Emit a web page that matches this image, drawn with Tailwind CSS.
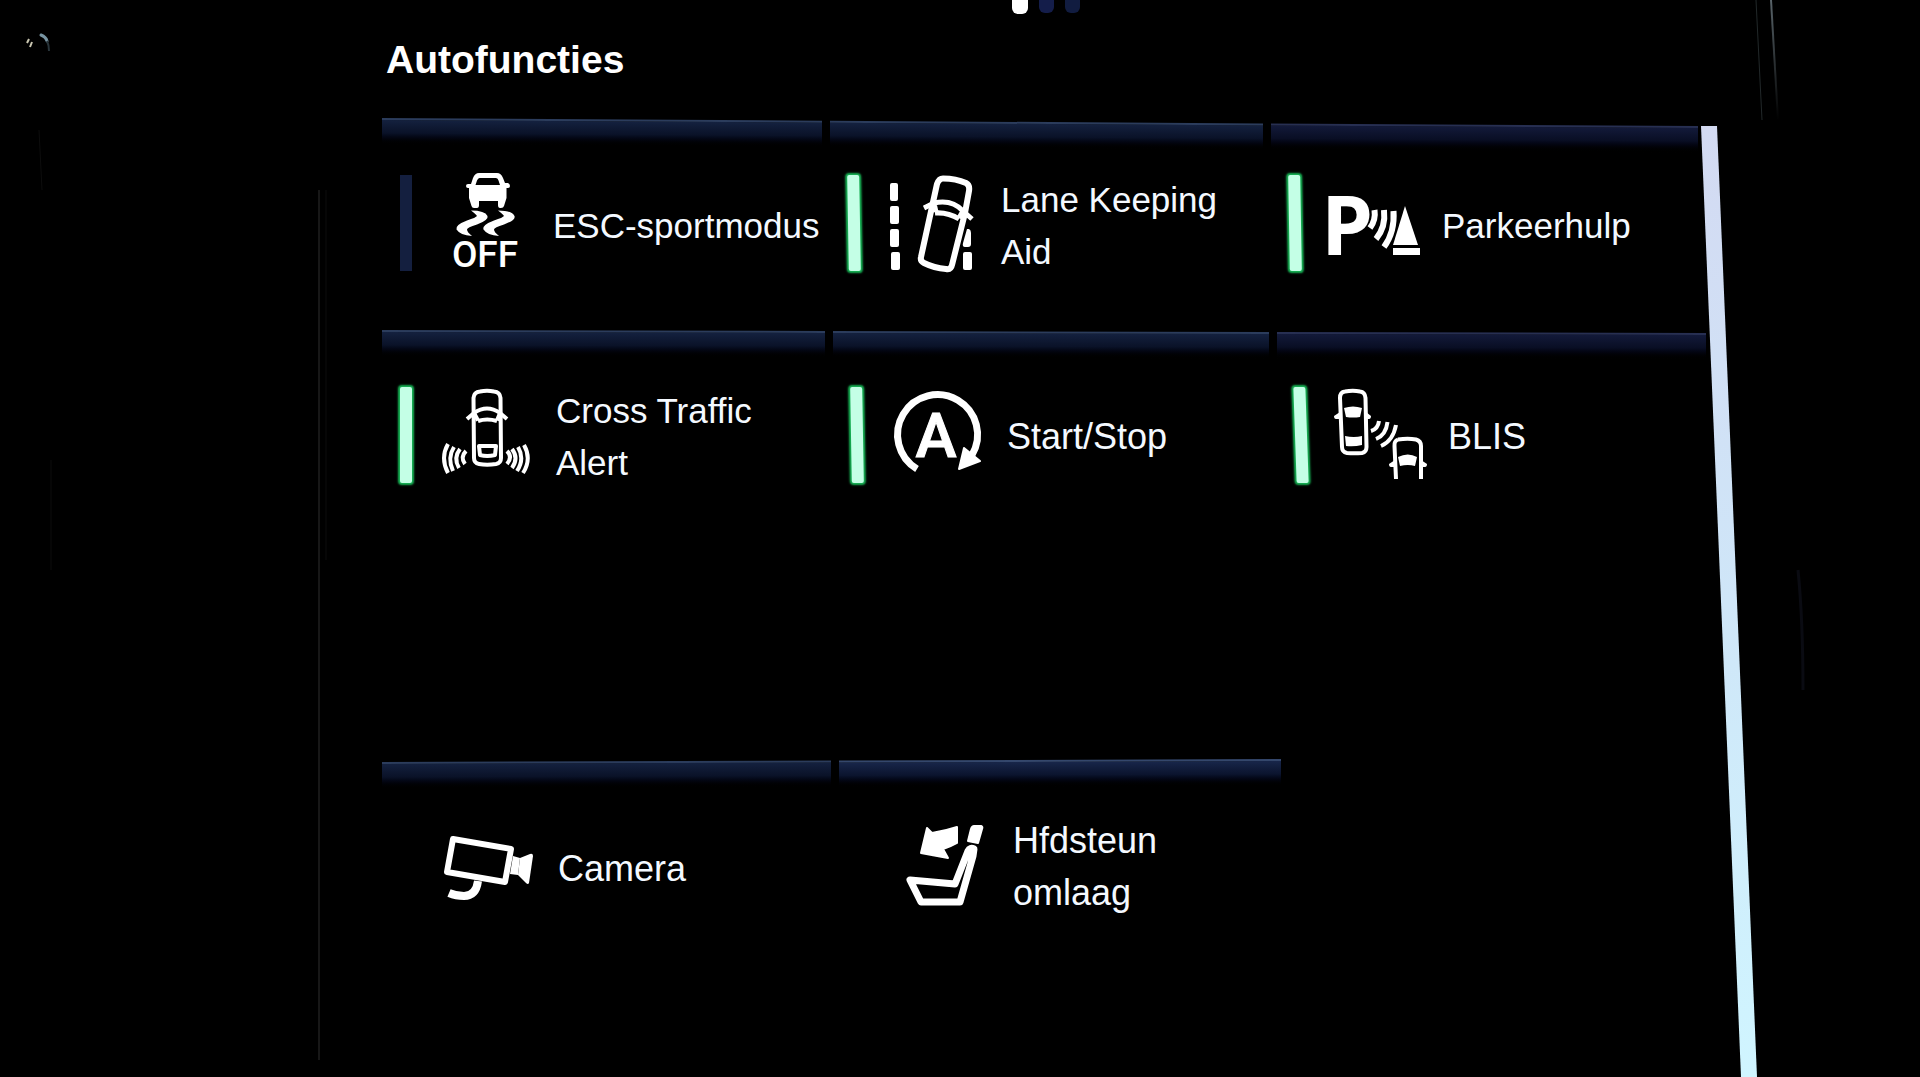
<!DOCTYPE html>
<html lang="nl">
<head>
    <meta charset="UTF-8">
    <meta name="viewport" content="width=device-width, initial-scale=1.0">
    <title>Autofuncties</title>
    <script src="https://cdn.jsdelivr.net/npm/@tailwindcss/browser@4"></script>
</head>
<body class="relative min-h-screen overflow-x-hidden bg-black font-['Liberation_Sans',Arial,sans-serif] text-[#f4f9ff]">

    <!-- Pagina-indicator -->
    <nav class="flex h-3.5 justify-center gap-[11px] pl-[172px]" aria-label="Pagina's">
        <button type="button" aria-label="Pagina 1" class="h-3.5 w-4 rounded-b-md bg-white"></button>
        <button type="button" aria-label="Pagina 2" class="h-[13px] w-[15px] rounded-b-md bg-[#141d4a]"></button>
        <button type="button" aria-label="Pagina 3" class="h-[13px] w-[15px] rounded-b-md bg-[#111c40]"></button>
    </nav>

    <main class="pl-[382px]">
        <h1 class="mt-[26px] mb-[39px] pl-1 text-[39px] leading-none font-bold text-white">Autofuncties</h1>

        <!-- Rij 1 -->
        <section class="mr-[222px]">
            <div class="grid h-7 origin-top-left skew-y-[0.35deg] grid-cols-[440fr_433fr_427fr] gap-2">
                <div class="border-t-2 border-[#2b3c5c] bg-linear-to-b from-[#14213f] via-[#0a1228] to-black"></div>
                <div class="border-t-2 border-[#2b3c5c] bg-linear-to-b from-[#14213f] via-[#0a1228] to-black"></div>
                <div class="border-t-2 border-[#272f52] bg-linear-to-b from-[#131a3a] via-[#090e24] to-black"></div>
            </div>
            <div class="grid grid-cols-[440fr_433fr_427fr] gap-2">
                <button type="button" aria-pressed="false" class="flex h-[154px] items-center pl-[18px] text-left">
                    <span class="h-24 w-3 shrink-0 bg-[#141f3f]"></span>
                    <svg class="ml-[26px] h-[98px] w-[94px] shrink-0 overflow-visible" viewBox="0 0 94 98" fill="#fff" aria-hidden="true">
                        <path fill-rule="evenodd" d="M41 -1H59Q63 -1 65 4L67 9H70Q72 10 72 12T70 14H68.500V24L66 32Q65.500 34 63 34H62Q60 34 60 31V27H41V31Q41 34 39 34H36Q34 34 33.500 32L31 24V14H30Q28 14 28 12T30 10H33L35 4Q37 -1 41 -1ZM41.500 4Q40 4 39 6.500L37.500 11H62L60.500 6.500Q60 4 58 4Z"/>
                        <path id="skid" d="M33 36.500Q47 36.500 49.500 42Q51 46 39 50.500Q29 53.500 29 55.500Q29 58 34 62Q22 61 18.500 55.500Q17 51 29 46.500Q38 43.500 39 42Q38 40 33 36.500Z"/>
                        <use href="#skid" x="27"/>
                        <text x="47" y="93" text-anchor="middle" font-family="Roboto, sans-serif" font-weight="500" font-size="37">OFF</text>
                    </svg>
                    <span class="ml-[21px] pt-1.5 text-[35px] leading-[52px]">ESC-sportmodus</span>
                </button>

                <button type="button" aria-pressed="true" class="flex h-[154px] items-center pl-[18px] text-left">
                    <span class="h-24 w-3 shrink-0 skew-x-1 rounded-xs bg-[#c4ffe6] shadow-[0_0_2px_2px_#17b455]"></span>
                    <svg class="ml-[26px] h-[98px] w-[94px] shrink-0 overflow-visible" viewBox="0 0 94 98" fill="none" stroke="#fff" stroke-width="6" stroke-linejoin="round" aria-hidden="true">
                        <g fill="#fff" stroke="none">
                            <rect x="4" y="9" width="8" height="18" rx="2"/>
                            <rect x="4" y="32" width="9" height="18" rx="2"/>
                            <rect x="4" y="55" width="9" height="18" rx="2"/>
                            <rect x="5" y="78" width="9" height="18" rx="2"/>
                            <path d="M81 55H83Q85 56 85 59V70Q85 73 82 73H79Q76 73 77 69Z"/>
                            <rect x="77" y="78" width="9" height="18" rx="2"/>
                        </g>
                        <path d="M57 4.500Q70 4.500 80 9Q84 11 83 17L79 39L66 91Q65 96 60 95Q48 94 38 89Q34 87 35 83L51 10Q53 4.500 57 4.500Z"/>
                        <path stroke-width="5" d="M38 34L48 29Q66 25 77 37L86 45M49 39Q62 38 73 45M48 29L50 38M77 37L73 44"/>
                    </svg>
                    <span class="ml-[21px] pt-1.5 text-[35px] leading-[52px]">Lane Keeping<br>Aid</span>
                </button>

                <button type="button" aria-pressed="true" class="flex h-[154px] items-center pl-[18px] text-left">
                    <span class="h-24 w-3 shrink-0 skew-x-1 rounded-xs bg-[#c4ffe6] shadow-[0_0_2px_2px_#17b455]"></span>
                    <svg class="ml-[26px] h-[98px] w-[94px] shrink-0 overflow-visible" viewBox="0 0 94 98" fill="#fff" aria-hidden="true">
                        <text x="-6" y="81" font-family="'Open Sans', sans-serif" font-weight="700" font-size="83">P</text>
                        <path fill="none" stroke="#fff" stroke-width="6" d="M47.500 36Q49 46 43 54M57 36Q59 53 49 65M66.500 37Q68 58 57 73"/>
                        <path d="M78 32L91 71H66Z"/>
                        <rect x="66" y="74" width="27" height="7"/>
                    </svg>
                    <span class="ml-[21px] pt-1.5 text-[35px] leading-[52px]">Parkeerhulp</span>
                </button>
            </div>
        </section>

        <!-- Rij 2 -->
        <section class="mt-[30px] mr-[214px]">
            <div class="grid h-7 origin-top-left skew-y-[0.13deg] grid-cols-[443fr_436fr_429fr] gap-2">
                <div class="border-t-2 border-[#2b3c5c] bg-linear-to-b from-[#14213f] via-[#0a1228] to-black"></div>
                <div class="border-t-2 border-[#2b3c5c] bg-linear-to-b from-[#14213f] via-[#0a1228] to-black"></div>
                <div class="border-t-2 border-[#272f52] bg-linear-to-b from-[#131a3a] via-[#090e24] to-black"></div>
            </div>
            <div class="grid grid-cols-[443fr_436fr_429fr] gap-2">
                <button type="button" aria-pressed="true" class="flex h-[154px] items-center pl-[18px] text-left">
                    <span class="h-24 w-3 shrink-0 rounded-xs bg-[#c4ffe6] shadow-[0_0_2px_2px_#17b455]"></span>
                    <svg class="ml-[26px] h-[98px] w-[94px] shrink-0 overflow-visible" viewBox="0 0 94 98" fill="none" stroke="#fff" stroke-width="4" stroke-linejoin="round" aria-hidden="true">
                        <path d="M42 5.500Q49 4 56 5.500Q62 6 62.500 12L63 72Q63 77 58 78Q49 79.500 41 78Q36 77 36 72L35.500 12Q36 6 42 5.500Z"/>
                        <path d="M29 33L36 27Q49 18 62 27L69 33M40 35Q49 32 59 35M36 27L40 34.500M62 27L59 34.500"/>
                        <path stroke-width="4" d="M41 60H58L57 69Q49 71 42 69Z"/>
                        <path stroke-width="4" d="M10 58Q2 72 10 87M16 61Q9 72 15 85M22 63Q15 72 21 82M28 65Q22 71 27 78"/>
                        <path stroke-width="4" d="M86 59Q94 73 85 87M80 61Q87 73 79 85M74 63Q81 72 74 82M69 65Q75 71 69 78"/>
                    </svg>
                    <span class="ml-6 pt-1 text-[35px] leading-[52px]">Cross Traffic<br>Alert</span>
                </button>

                <button type="button" aria-pressed="true" class="flex h-[154px] items-center pl-[18px] text-left">
                    <span class="h-24 w-3 shrink-0 skew-x-1 rounded-xs bg-[#c4ffe6] shadow-[0_0_2px_2px_#17b455]"></span>
                    <svg class="ml-[26px] h-[98px] w-[94px] shrink-0 overflow-visible" viewBox="0 0 94 98" fill="#fff" aria-hidden="true">
                        <path fill="none" stroke="#fff" stroke-width="7" d="M28 83A40 40 0 1 1 83 69"/>
                        <path stroke="#fff" stroke-width="2" stroke-linejoin="round" d="M75 62L91 75L70 83Z"/>
                        <text x="47" y="71" text-anchor="middle" font-family="Roboto, sans-serif" font-weight="500" font-size="62" stroke="#fff">A</text>
                    </svg>
                    <span class="ml-6 pt-1 text-[36px] leading-[52px]">Start/Stop</span>
                </button>

                <button type="button" aria-pressed="true" class="flex h-[154px] items-center pl-[18px] text-left">
                    <span class="h-24 w-3 shrink-0 skew-x-2 rounded-xs bg-[#c4ffe6] shadow-[0_0_2px_2px_#17b455]"></span>
                    <svg class="ml-[26px] h-[98px] w-[94px] shrink-0 overflow-visible" viewBox="0 0 94 98" fill="none" stroke="#fff" stroke-width="4" stroke-linejoin="round" aria-hidden="true">
                        <path d="M12 5.500Q20 4 27 5.500Q32 6 32.500 12L33.500 61Q33.500 66 29 67Q21 67.500 14 67Q9 66 9 61L7 12Q7 6 12 5.500Z"/>
                        <path d="M65 53.500Q75 52 83 53.500Q88 55 88 60V93M63 93L61.500 60Q61 55 65 53.500"/>
                        <g fill="#fff" stroke="none">
                            <path d="M7 26L1 30Q1 33 3 33H7ZM33 26L38 30Q38 33 36 33H33Z"/>
                            <path d="M11 22Q20 19 29 22L27 31Q20 32 13 31Z"/>
                            <path d="M12 50Q21 52 29 50V59Q21 61 13 60Z"/>
                            <path d="M62 74L56 78Q56 81 58 81H62ZM88 74L94 78Q94 81 92 81H88Z"/>
                            <path d="M65 71Q75 66 84 71L82 80Q75 78 67 80Z"/>
                        </g>
                        <path d="M46 35Q45 43 38 45M54.500 36Q53 49 43 53M63 39Q60 55 48 60"/>
                    </svg>
                    <span class="ml-[21px] pt-1 text-[36px] leading-[52px]">BLIS</span>
                </button>
            </div>
        </section>

        <!-- Rij 4 (rij 3 is leeg) -->
        <section class="mt-[250px] mr-[198px]">
            <div class="grid h-7 origin-top-left skew-y-[-0.19deg] grid-cols-[449fr_442fr_433fr] gap-2">
                <div class="border-t-2 border-[#2b3c5c] bg-linear-to-b from-[#14213f] via-[#0a1228] to-black"></div>
                <div class="border-t-2 border-[#34476c] bg-linear-to-b from-[#18264a] via-[#0b142e] to-black"></div>
            </div>
            <div class="grid grid-cols-[449fr_442fr_433fr] gap-2">
                <button type="button" class="flex h-[154px] items-center pl-14 text-left">
                    <svg class="h-[98px] w-[94px] shrink-0 overflow-visible" viewBox="0 0 94 98" fill="none" stroke="#fff" stroke-width="6" stroke-linejoin="round" aria-hidden="true">
                        <path d="M15 21L73 31L67 64L9 54Z"/>
                        <path stroke-width="8" d="M40 63Q38 78 26 78Q18 78 11 75"/>
                        <path fill="#fff" stroke="none" d="M75 38L82 40L80 57L72 56Z"/>
                        <path fill="#fff" stroke="none" d="M82 40L92 36Q95 35 95 38L91 65Q90 67 88 65L80 57Z"/>
                    </svg>
                    <span class="ml-[26px] pt-1 text-[36px] leading-[52px]">Camera</span>
                </button>

                <button type="button" class="flex h-[154px] items-center pl-14 text-left">
                    <svg class="h-[98px] w-[94px] shrink-0 overflow-visible" viewBox="0 0 94 98" fill="#fff" stroke="#fff" stroke-width="2" stroke-linejoin="round" aria-hidden="true">
                        <path d="M26 35L32 10L37 15Q50 13 62 9V25Q55 29 48 31L53 40Z"/>
                        <path d="M79 8H86Q88 9 87 11L83 25L73 23L76 11Q77 8 79 8Z"/>
                        <path fill="none" stroke-width="7" d="M15 62L60 66L73 33Q75 29 79 31L78 38L65 84H26Z"/>
                    </svg>
                    <span class="ml-6 text-[36px] leading-[52px]">Hfdsteun<br>omlaag</span>
                </button>
            </div>
        </section>
    </main>

    <!-- Schuifbalk en reflecties in de rand van het scherm -->
    <svg class="pointer-events-none absolute inset-0 h-full w-full" viewBox="0 0 1920 1077" preserveAspectRatio="none" fill="none" aria-hidden="true">
        <defs>
            <linearGradient id="bar" x1="0" y1="0" x2="0" y2="1">
                <stop offset="0" stop-color="#d3daf2"/>
                <stop offset="0.500" stop-color="#cfe6f8"/>
                <stop offset="1" stop-color="#d0f5ff"/>
            </linearGradient>
            <linearGradient id="edge" x1="0" y1="0" x2="0" y2="1">
                <stop offset="0" stop-color="#59646a"/>
                <stop offset="1" stop-color="#000"/>
            </linearGradient>
        </defs>
        <path fill="url(#bar)" d="M1701 126H1717L1757 1077H1741Z"/>
        <path stroke="url(#edge)" stroke-width="2" d="M1771 0L1778 120"/>
        <path stroke="#22282a" d="M1756 0L1762 120"/>
        <path stroke="#0a0b12" stroke-width="3" d="M1798 570Q1803 620 1803 690"/>
        <path stroke="#171717" stroke-width="2" d="M319 190V1060"/>
        <path stroke="#0d0d0d" d="M326 190V560M39 130L42 190M51 460V570"/>
        <path stroke="#7894a2" stroke-width="3" stroke-linecap="round" d="M41 35Q46 37 47 41"/>
        <path stroke="#28343a" stroke-width="2" d="M47 41Q49 45 49 51"/>
        <path stroke="#c9c6b0" stroke-width="2" d="M29 39L27 43M32 42L30 47"/>
    </svg>
</body>
</html>
